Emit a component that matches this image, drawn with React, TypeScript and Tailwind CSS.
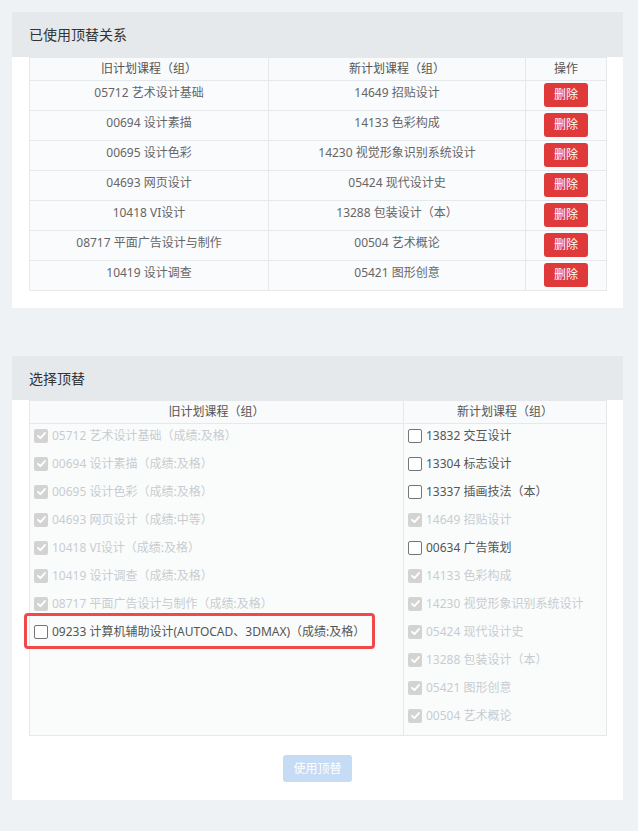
import React from "react";

const used: [string, string][] = [
  ["05712 艺术设计基础", "14649 招贴设计"],
  ["00694 设计素描", "14133 色彩构成"],
  ["00695 设计色彩", "14230 视觉形象识别系统设计"],
  ["04693 网页设计", "05424 现代设计史"],
  ["10418 VI设计", "13288 包装设计（本）"],
  ["08717 平面广告设计与制作", "00504 艺术概论"],
  ["10419 设计调查", "05421 图形创意"],
];

const oldList: { t: string; c: boolean }[] = [
  { t: "05712 艺术设计基础（成绩:及格）", c: true },
  { t: "00694 设计素描（成绩:及格）", c: true },
  { t: "00695 设计色彩（成绩:及格）", c: true },
  { t: "04693 网页设计（成绩:中等）", c: true },
  { t: "10418 VI设计（成绩:及格）", c: true },
  { t: "10419 设计调查（成绩:及格）", c: true },
  { t: "08717 平面广告设计与制作（成绩:及格）", c: true },
  { t: "09233 计算机辅助设计(AUTOCAD、3DMAX)（成绩:及格）", c: false },
];

const newList: { t: string; c: boolean }[] = [
  { t: "13832 交互设计", c: false },
  { t: "13304 标志设计", c: false },
  { t: "13337 插画技法（本）", c: false },
  { t: "14649 招贴设计", c: true },
  { t: "00634 广告策划", c: false },
  { t: "14133 色彩构成", c: true },
  { t: "14230 视觉形象识别系统设计", c: true },
  { t: "05424 现代设计史", c: true },
  { t: "13288 包装设计（本）", c: true },
  { t: "05421 图形创意", c: true },
  { t: "00504 艺术概论", c: true },
];

function Box({ checked }: { checked: boolean }) {
  if (checked) {
    return (
      <span className="w-[14px] h-[14px] rounded-[2px] bg-[#d3d3d3] flex items-center justify-center shrink-0">
        <svg width="11" height="11" viewBox="0 0 12 12">
          <path d="M2.2 6.3 L4.8 8.9 L9.8 3.3" fill="none" stroke="#ffffff" strokeWidth="2" strokeLinecap="round" strokeLinejoin="round" />
        </svg>
      </span>
    );
  }
  return <span className="w-[14px] h-[14px] rounded-[2px] border border-[#767676] bg-white shrink-0" />;
}

function Item({ t, c, hl }: { t: string; c: boolean; hl?: boolean }) {
  return (
    <div className="relative h-[28px] pb-[5px] flex items-center gap-[4px] whitespace-nowrap">
      <Box checked={c} />
      <span className={c ? "text-[#c8ccd0]" : "text-[#555]"}>{t}</span>
      {hl && (
        <div className="absolute left-[-10px] top-[-7px] w-[351px] h-[36px] border-[3px] border-[#f24848] rounded-[4px]" />
      )}
    </div>
  );
}

export default function App() {
  return (
    <div
      className="min-h-[831px] bg-[#eff2f4] pt-[12px] pl-[12px] text-[12px]"
      style={{ fontFamily: '"Noto Sans", "Noto Sans CJK SC", sans-serif' }}
    >
      <div className="w-[611px] bg-white">
        <div className="h-[45px] bg-[#e5e9ec] px-[17px] flex items-center text-[14px] text-[#333]">已使用顶替关系</div>
        <div className="px-[17px] pb-[17px]">
          <table className="w-[577px] border-collapse table-fixed">
            <colgroup>
              <col className="w-[239px]" />
              <col className="w-[257px]" />
              <col className="w-[81px]" />
            </colgroup>
            <thead>
              <tr className="h-[23px] bg-[#f8fafb] text-[#555]">
                <th className="font-normal border border-[#e6e9ec] p-0 leading-[20px]">旧计划课程（组）</th>
                <th className="font-normal border border-[#e6e9ec] p-0 leading-[20px]">新计划课程（组）</th>
                <th className="font-normal border border-[#e6e9ec] p-0 leading-[20px]">操作</th>
              </tr>
            </thead>
            <tbody>
              {used.map(([a, b], i) => (
                <tr key={i} className="h-[30px] bg-[#fafbfc] text-[#666]">
                  <td className="border border-[#e6e9ec] align-top text-center pt-[3px] leading-[18px]">{a}</td>
                  <td className="border border-[#e6e9ec] align-top text-center pt-[3px] leading-[18px]">{b}</td>
                  <td className="border border-[#e6e9ec] align-top pt-[2px] pb-[3px]">
                    <div className="flex justify-center">
                      <button className="w-[44px] h-[24px] rounded-[3px] bg-[#e0393a] text-white text-[12px] leading-[24px]">删除</button>
                    </div>
                  </td>
                </tr>
              ))}
            </tbody>
          </table>
        </div>
      </div>

      <div className="w-[611px] bg-white mt-[48px]">
        <div className="h-[44px] bg-[#e5e9ec] px-[17px] flex items-center text-[14px] text-[#333]">选择顶替</div>
        <div className="px-[17px] pb-[18px]">
          <table className="w-[577px] border-collapse table-fixed">
            <colgroup>
              <col className="w-[374px]" />
              <col className="w-[203px]" />
            </colgroup>
            <thead>
              <tr className="h-[23px] bg-[#f8fafb] text-[#555]">
                <th className="font-normal border border-[#e6e9ec] p-0 leading-[20px]">旧计划课程（组）</th>
                <th className="font-normal border border-[#e6e9ec] p-0 leading-[20px]">新计划课程（组）</th>
              </tr>
            </thead>
            <tbody>
              <tr className="bg-[#fafcfc]">
                <td className="border border-[#e6e9ec] align-top pl-[4px] pb-[3px]">
                  {oldList.map((it, i) => (
                    <Item key={i} t={it.t} c={it.c} hl={i === 7} />
                  ))}
                </td>
                <td className="border border-[#e6e9ec] align-top pl-[4px] pb-[3px]">
                  {newList.map((it, i) => (
                    <Item key={i} t={it.t} c={it.c} />
                  ))}
                </td>
              </tr>
            </tbody>
          </table>
          <div className="flex justify-center mt-[19px]">
            <button className="w-[69px] h-[27px] rounded-[3px] bg-[#c6dbf4] text-white text-[12px]">使用顶替</button>
          </div>
        </div>
      </div>
    </div>
  );
}
